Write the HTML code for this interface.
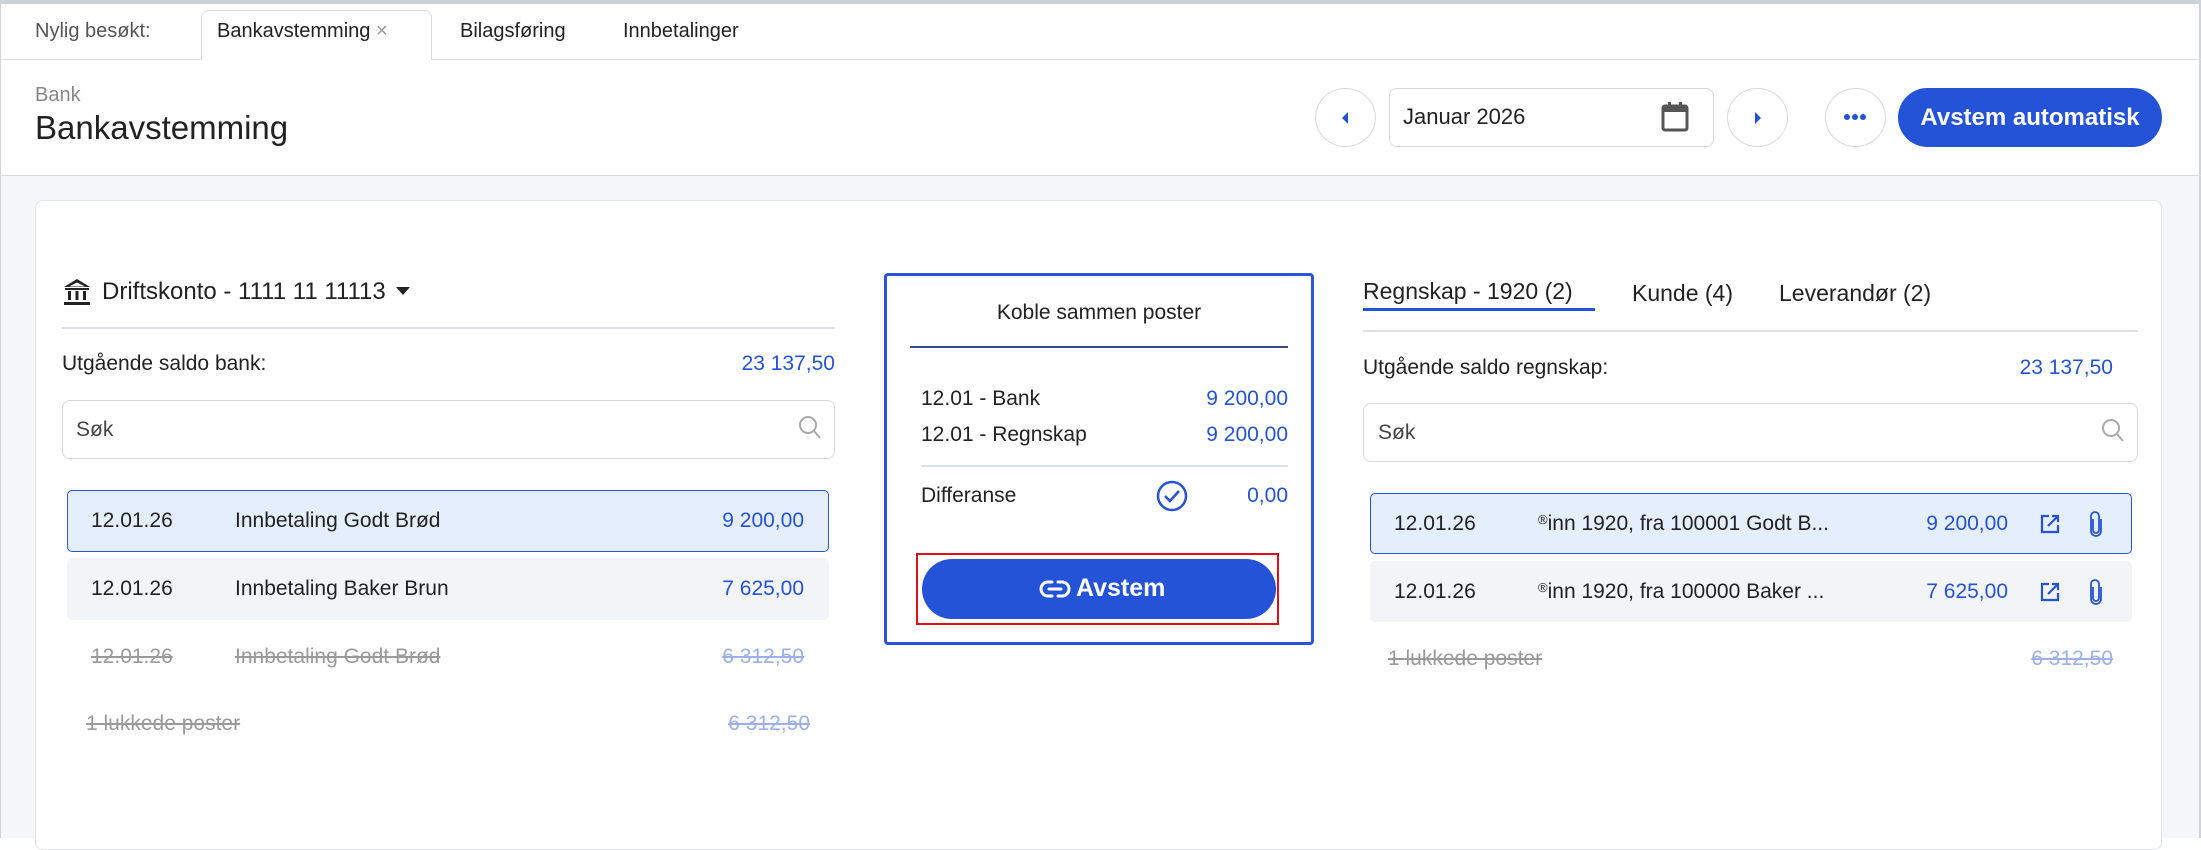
<!DOCTYPE html>
<html><head><meta charset="utf-8"><style>
*{margin:0;padding:0;box-sizing:border-box}
body{width:2201px;height:838px;overflow:hidden;background:#fff;font-family:"Liberation Sans",sans-serif;color:#222;position:relative}
.a{position:absolute;white-space:nowrap}
.blue{color:#2453d8}
.r{text-align:right}
.strike{text-decoration:line-through;color:#9a9a9a}
.strikeb{text-decoration:line-through;color:#9db0ea}
.circ{position:absolute;width:61px;height:59px;border:1.5px solid #d6d9de;border-radius:50%;background:#fff}
</style></head><body>
<div class="a" style="left:0;top:0;width:2201px;height:4px;background:#cdd2d9"></div>
<div class="a" style="left:0;top:0;width:1px;height:838px;background:#d0d4da"></div>
<div class="a" style="left:2199px;top:0;width:2px;height:838px;background:#d0d4da"></div>
<div class="a" style="left:0;top:59px;width:2201px;height:1px;background:#d8dbe0"></div>
<div class="a" style="left:35px;top:20px;font-size:20px;color:#555">Nylig besøkt:</div>
<div class="a" style="left:201px;top:10px;width:231px;height:50px;border:1px solid #d8dbe0;border-bottom:none;border-radius:8px 8px 0 0;background:#fff"></div>
<div class="a" style="left:217px;top:20px;font-size:20px;color:#222">Bankavstemming <span style="color:#999">×</span></div>
<div class="a" style="left:460px;top:20px;font-size:20px">Bilagsføring</div>
<div class="a" style="left:623px;top:20px;font-size:20px">Innbetalinger</div>
<div class="a" style="left:35px;top:84px;font-size:20px;color:#888">Bank</div>
<div class="a" style="left:35px;top:109px;font-size:33px;color:#222">Bankavstemming</div>
<div class="a" style="left:0;top:175px;width:2201px;height:1px;background:#d8dbe0"></div>
<div class="a" style="left:1px;top:176px;width:2198px;height:662px;background:#f4f6f8"></div>
<div class="circ" style="left:1315px;top:88px"></div>
<svg class="a" style="left:1340px;top:110px" width="10" height="16"><path d="M8 2L2 8l6 6z" fill="#2453d8"/></svg>
<div class="a" style="left:1389px;top:88px;width:325px;height:59px;border:1.5px solid #d6d9de;border-radius:8px;background:#fff"></div>
<div class="a" style="left:1403px;top:104px;font-size:22px">Januar 2026</div>
<svg class="a" style="left:1660px;top:101px" width="30" height="32"><rect x="3" y="5" width="24" height="24" rx="2" fill="none" stroke="#555" stroke-width="3"/><rect x="3" y="5" width="24" height="6" fill="#555"/><rect x="8" y="1" width="3" height="6" fill="#555"/><rect x="19" y="1" width="3" height="6" fill="#555"/></svg>
<div class="circ" style="left:1727px;top:88px"></div>
<svg class="a" style="left:1753px;top:110px" width="10" height="16"><path d="M2 2l6 6-6 6z" fill="#2453d8"/></svg>
<div class="circ" style="left:1825px;top:88px"></div>
<svg class="a" style="left:1843px;top:113px" width="24" height="8"><circle cx="4" cy="4" r="3" fill="#2453d8"/><circle cx="12" cy="4" r="3" fill="#2453d8"/><circle cx="20" cy="4" r="3" fill="#2453d8"/></svg>
<div class="a" style="left:1898px;top:88px;width:264px;height:59px;border-radius:30px;background:#2453d8;color:#fff;font-size:24px;font-weight:bold;text-align:center;line-height:59px">Avstem automatisk</div>
<div class="a" style="left:35px;top:200px;width:2127px;height:650px;background:#fff;border:1.5px solid #dfe3e8;border-radius:8px"></div>
<svg class="a" style="left:62px;top:277px" width="30" height="30"><path d="M15 2L2 10h26z" fill="#222"/><path d="M15 5.5L7 9.5h16z" fill="#fff"/><rect x="3" y="11" width="24" height="2" fill="#222"/><rect x="6" y="14" width="3" height="9" fill="#222"/><rect x="13.5" y="14" width="3" height="9" fill="#222"/><rect x="21" y="14" width="3" height="9" fill="#222"/><rect x="2" y="25" width="26" height="3" fill="#222"/></svg>
<div class="a" style="left:102px;top:278px;font-size:24px">Driftskonto - 1111 11 11113</div>
<svg class="a" style="left:395px;top:286px" width="16" height="10"><path d="M1 1h14L8 9z" fill="#222"/></svg>
<div class="a" style="left:62px;top:327px;width:773px;height:1.5px;background:#dde0e6"></div>
<div class="a" style="left:62px;top:352px;font-size:21px">Utgående saldo bank:</div>
<div class="a blue" style="left:635px;width:200px;top:352px;font-size:21px;text-align:right">23 137,50</div>
<div class="a" style="left:62px;top:400px;width:773px;height:59px;border:1.5px solid #d6d9de;border-radius:8px"></div>
<div class="a" style="left:76px;top:418px;font-size:21px;color:#444">Søk</div>
<svg class="a" style="left:797px;top:414px" width="26" height="28"><circle cx="11" cy="11" r="8" fill="none" stroke="#aaa" stroke-width="2"/><path d="M17 17l6 7" stroke="#aaa" stroke-width="2"/></svg>
<div class="a" style="left:67px;top:490px;width:762px;height:62px;background:#e5eefd;border:1.5px solid #2a55d8;border-radius:5px"></div>
<div class="a" style="left:91px;top:509px;font-size:21px">12.01.26</div>
<div class="a" style="left:235px;top:509px;font-size:21px">Innbetaling Godt Brød</div>
<div class="a blue r" style="left:604px;width:200px;top:509px;font-size:21px">9 200,00</div>
<div class="a" style="left:67px;top:558px;width:762px;height:62px;background:#f3f4f8;border-radius:5px"></div>
<div class="a" style="left:91px;top:577px;font-size:21px">12.01.26</div>
<div class="a" style="left:235px;top:577px;font-size:21px">Innbetaling Baker Brun</div>
<div class="a blue r" style="left:604px;width:200px;top:577px;font-size:21px">7 625,00</div>
<div class="a strike" style="left:91px;top:645px;font-size:21px">12.01.26</div>
<div class="a strike" style="left:235px;top:645px;font-size:21px">Innbetaling Godt Brød</div>
<div class="a strikeb r" style="left:604px;width:200px;top:645px;font-size:21px">6 312,50</div>
<div class="a strike" style="left:86px;top:712px;font-size:21px">1 lukkede poster</div>
<div class="a strikeb r" style="left:610px;width:200px;top:712px;font-size:21px">6 312,50</div>
<div class="a" style="left:884px;top:273px;width:430px;height:372px;border:3px solid #2a55d8;border-radius:4px;background:#fff"></div>
<div class="a" style="left:884px;width:430px;top:301px;font-size:21px;text-align:center">Koble sammen poster</div>
<div class="a" style="left:910px;top:346px;width:378px;height:1.5px;background:#3a4a8a"></div>
<div class="a" style="left:921px;top:387px;font-size:21px">12.01 - Bank</div>
<div class="a blue r" style="left:1088px;width:200px;top:387px;font-size:21px">9 200,00</div>
<div class="a" style="left:921px;top:423px;font-size:21px">12.01 - Regnskap</div>
<div class="a blue r" style="left:1088px;width:200px;top:423px;font-size:21px">9 200,00</div>
<div class="a" style="left:921px;top:465px;width:367px;height:1.5px;background:#dde0e6"></div>
<div class="a" style="left:921px;top:484px;font-size:21px">Differanse</div>
<svg class="a" style="left:1156px;top:480px" width="32" height="32"><circle cx="16" cy="16" r="14" fill="none" stroke="#2453d8" stroke-width="2.5"/><path d="M9 16l5 5 9-10" fill="none" stroke="#2453d8" stroke-width="2.5"/></svg>
<div class="a blue r" style="left:1088px;width:200px;top:484px;font-size:21px">0,00</div>
<div class="a" style="left:916px;top:553px;width:363px;height:72px;border:2px solid #e0101a"></div>
<div class="a" style="left:922px;top:559px;width:354px;height:60px;border-radius:30px;background:#2453d8"></div>
<svg class="a" style="left:1039px;top:578px" width="32" height="22"><path d="M13 4H9a7 7 0 000 14h4M19 4h4a7 7 0 010 14h-4M10 11h12" fill="none" stroke="#fff" stroke-width="3" stroke-linecap="round"/></svg>
<div class="a" style="left:1076px;top:574px;font-size:25px;font-weight:bold;color:#fff">Avstem</div>
<div class="a" style="left:1363px;top:278px;font-size:23px">Regnskap - 1920 (2)</div>
<div class="a" style="left:1363px;top:308px;width:232px;height:3px;background:#2453d8"></div>
<div class="a" style="left:1632px;top:280px;font-size:23px">Kunde (4)</div>
<div class="a" style="left:1779px;top:280px;font-size:23px">Leverandør (2)</div>
<div class="a" style="left:1363px;top:330px;width:775px;height:1.5px;background:#dde0e6"></div>
<div class="a" style="left:1363px;top:356px;font-size:21px">Utgående saldo regnskap:</div>
<div class="a blue r" style="left:1913px;width:200px;top:356px;font-size:21px">23 137,50</div>
<div class="a" style="left:1363px;top:403px;width:775px;height:59px;border:1.5px solid #d6d9de;border-radius:8px"></div>
<div class="a" style="left:1378px;top:421px;font-size:21px;color:#444">Søk</div>
<svg class="a" style="left:2100px;top:417px" width="26" height="28"><circle cx="11" cy="11" r="8" fill="none" stroke="#aaa" stroke-width="2"/><path d="M17 17l6 7" stroke="#aaa" stroke-width="2"/></svg>
<div class="a" style="left:1370px;top:493px;width:762px;height:61px;background:#e5eefd;border:1.5px solid #2a55d8;border-radius:5px"></div>
<div class="a" style="left:1394px;top:512px;font-size:21px">12.01.26</div>
<div class="a" style="left:1538px;top:512px;font-size:21px"><span style="font-size:13px;vertical-align:6px">®</span>inn 1920, fra 100001 Godt B...</div>
<div class="a blue r" style="left:1808px;width:200px;top:512px;font-size:21px">9 200,00</div>
<div class="a" style="left:1370px;top:561px;width:762px;height:61px;background:#f3f4f8;border-radius:5px"></div>
<div class="a" style="left:1394px;top:580px;font-size:21px">12.01.26</div>
<div class="a" style="left:1538px;top:580px;font-size:21px"><span style="font-size:13px;vertical-align:6px">®</span>inn 1920, fra 100000 Baker ...</div>
<div class="a blue r" style="left:1808px;width:200px;top:580px;font-size:21px">7 625,00</div>
<svg class="a" style="left:2040px;top:514px" width="20" height="20"><path d="M9 2H2v16h16v-7" fill="none" stroke="#2453d8" stroke-width="2.2"/><path d="M8 12L18 2M12 2h6v6" fill="none" stroke="#2453d8" stroke-width="2.2"/></svg>
<svg class="a" style="left:2040px;top:582px" width="20" height="20"><path d="M9 2H2v16h16v-7" fill="none" stroke="#2453d8" stroke-width="2.2"/><path d="M8 12L18 2M12 2h6v6" fill="none" stroke="#2453d8" stroke-width="2.2"/></svg>
<svg class="a" style="left:2089px;top:511px" width="14" height="26"><path d="M4 8v11a3 3 0 006 0V5a4 4 0 00-8 0v15a5 5 0 0010 0V8" fill="none" stroke="#2453d8" stroke-width="1.8"/></svg>
<svg class="a" style="left:2089px;top:579px" width="14" height="26"><path d="M4 8v11a3 3 0 006 0V5a4 4 0 00-8 0v15a5 5 0 0010 0V8" fill="none" stroke="#2453d8" stroke-width="1.8"/></svg>
<div class="a strike" style="left:1388px;top:647px;font-size:21px">1 lukkede poster</div>
<div class="a strikeb r" style="left:1913px;width:200px;top:647px;font-size:21px">6 312,50</div>
</body></html>
